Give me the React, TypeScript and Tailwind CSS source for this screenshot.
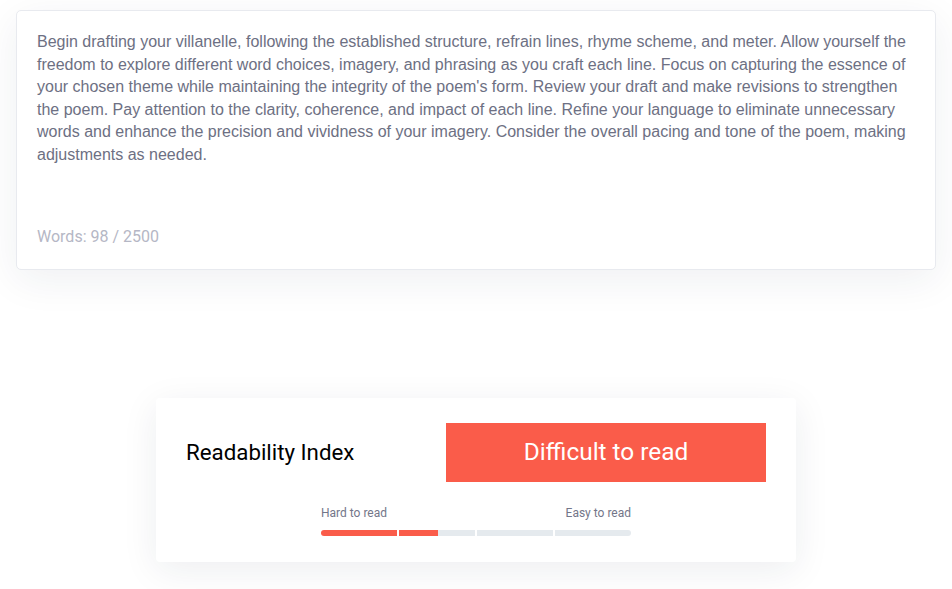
import React from "react";

const text =
  "Begin drafting your villanelle, following the established structure, refrain lines, rhyme scheme, and meter. Allow yourself the freedom to explore different word choices, imagery, and phrasing as you craft each line. Focus on capturing the essence of your chosen theme while maintaining the integrity of the poem's form. Review your draft and make revisions to strengthen the poem. Pay attention to the clarity, coherence, and impact of each line. Refine your language to eliminate unnecessary words and enhance the precision and vividness of your imagery. Consider the overall pacing and tone of the poem, making adjustments as needed.";

export default function App() {
  return (
    <div className="w-[952px] h-[589px] bg-white flex flex-col overflow-hidden">
      <div className="mx-4 mt-[10px] rounded-[5px] border border-[#e8eaef] bg-white shadow-[0_10px_40px_rgba(30,40,70,0.07)] px-5 pt-5 pb-[21px]">
        <p className="font-['Liberation_Sans',Arial,sans-serif] text-[16px] leading-[22.6px] text-[#6d7083] h-[195px]">
          {text}
        </p>
        <div className="font-['Roboto',sans-serif] text-[16px] leading-[22px] text-[#b5b7c5]">
          Words: 98 / 2500
        </div>
      </div>

      <div className="mt-[128px] mx-auto w-[640px] bg-white rounded-[4px] shadow-[0_8px_36px_rgba(30,40,70,0.08)] px-[30px] pt-[25px] pb-[26px] font-['Roboto',sans-serif]">
        <div className="flex items-center justify-between">
          <div className="text-[22.3px] text-black">Readability Index</div>
          <div className="w-[320px] h-[59px] bg-[#fa5c4a] text-white text-[24.4px] flex items-center justify-center">
            Difficult to read
          </div>
        </div>
        <div className="mx-auto w-[310px] mt-[23px]">
          <div className="flex justify-between text-[12px] leading-[16px] text-[#737689]">
            <span>Hard to read</span>
            <span>Easy to read</span>
          </div>
          <div className="mt-[9px] flex gap-[2px] h-[6px]">
            <div className="w-[76px] bg-[#fa5c4a] rounded-l-full" />
            <div className="w-[76px] bg-[#e5eaee] flex">
              <div className="w-[39px] bg-[#fa5c4a]" />
            </div>
            <div className="w-[76px] bg-[#e5eaee]" />
            <div className="w-[76px] bg-[#e5eaee] rounded-r-full" />
          </div>
        </div>
      </div>
    </div>
  );
}
